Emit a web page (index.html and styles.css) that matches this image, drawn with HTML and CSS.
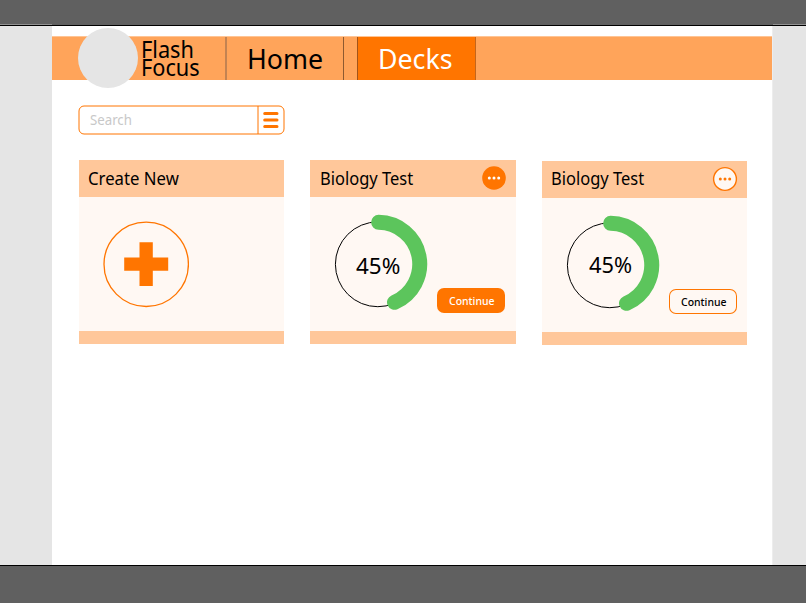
FILE: index.html
```html
<!DOCTYPE html>
<html lang="en">
<head>
<meta charset="utf-8">
<title>Flash Focus</title>
<link rel="stylesheet" href="styles.css">
</head>
<body>
<div class="band band-top"></div>
<div class="stage">
  <aside class="side side-left"></aside>
  <main class="page">
    <header class="topbar">
      <div class="avatar"></div>
      <div class="brand"><span class="t">Flash</span><span class="t">Focus</span></div>
      <nav class="tabs">
        <a class="tab home"><span class="t">Home</span></a>
        <a class="tab decks"><span class="t">Decks</span></a>
      </nav>
    </header>
    <div class="search">
      <span class="t placeholder">Search</span>
      <svg class="frame" width="208" height="30" viewBox="0 0 208 30">
        <rect x="1" y="1" width="205" height="28" rx="5"/>
        <path d="M180 1V29"/>
        <path class="bars" d="M186.700 8.500H199M186.700 14.900H199M186.700 21.400H199"/>
      </svg>
    </div>
    <section class="cards">
      <article class="card">
        <div class="card-head"><h2 class="t create">Create New</h2></div>
        <div class="card-body">
          <svg class="art" width="110" height="134" viewBox="0 0 110 134">
            <circle class="ring-orange" cx="67.200" cy="67.300" r="42.200"/>
            <path class="plus" d="M60.500 45.200h13.300v15.200h15.400v13.300H73.800v15.300H60.500V73.700H45.200V60.400h15.300z"/>
          </svg>
        </div>
        <div class="card-foot"></div>
      </article>
      <article class="card wide">
        <div class="card-head"><h2 class="t">Biology Test</h2>
          <svg class="more solid" width="26" height="26" viewBox="0 0 26 26"><circle class="disc" cx="13" cy="13" r="11.800"/><circle cx="8.300" cy="13" r="1.500"/><circle cx="13" cy="13" r="1.500"/><circle cx="17.700" cy="13" r="1.500"/></svg>
        </div>
        <div class="card-body">
          <svg class="art" width="125" height="134" viewBox="0 0 125 134">
            <circle class="track" cx="67.800" cy="67.300" r="42.400"/>
            <path class="value" d="M68.600 25.300A41.700 41.700 0 0 1 84.500 105.300"/>
          </svg>
          <span class="t percent">45%</span>
          <button class="btn filled"><span class="t">Continue</span></button>
        </div>
        <div class="card-foot"></div>
      </article>
      <article class="card lower">
        <div class="card-head"><h2 class="t">Biology Test</h2>
          <svg class="more outline" width="26" height="26" viewBox="0 0 26 26"><circle class="disc" cx="13" cy="13" r="11.400"/><circle cx="8.300" cy="13" r="1.500"/><circle cx="13" cy="13" r="1.500"/><circle cx="17.700" cy="13" r="1.500"/></svg>
        </div>
        <div class="card-body">
          <svg class="art" width="125" height="134" viewBox="0 0 125 134">
            <circle class="track" cx="67.800" cy="67.300" r="42.400"/>
            <path class="value" d="M68.600 25.300A41.700 41.700 0 0 1 84.500 105.300"/>
          </svg>
          <span class="t percent">45%</span>
          <button class="btn outlined"><span class="t">Continue</span></button>
        </div>
        <div class="card-foot"></div>
      </article>
    </section>
  </main>
  <aside class="side side-right"></aside>
</div>
<div class="band band-bottom"></div>
</body>
</html>
```
FILE: styles.css
```css
* { box-sizing: border-box; }
body {
  margin: 0;
  width: 806px;
  height: 603px;
  overflow: hidden;
  display: flex;
  flex-direction: column;
  background: #fff;
  color: #000;
  font-family: "Noto Sans", "Open Sans", sans-serif;
}
.t {
  display: inline-block;
  white-space: nowrap;
  transform-origin: 0 50%;
  transform: scaleX(.915);
}
.band { background: #606060; flex: none; }
.band-top { height: 26px; border-bottom: 1px solid #000; }
.band-bottom { height: 38px; border-top: 1px solid #000; }
.stage { display: flex; height: 539px; }
.side { background: #e5e5e5; position: relative; }
.side::before {
  content: "";
  position: absolute;
  left: 0;
  right: 0;
  top: -2px;
  height: 1px;
  background: #929292;
}
.side-left { width: 52px; }
.side-right { width: 34px; border-left: 1px solid #ededed; }
.page { width: 720px; padding-top: 10px; }

.topbar {
  height: 44px;
  display: flex;
  align-items: center;
  background: #ffa45a;
  border-top: 1px solid #ffc494;
}
.avatar {
  flex: none;
  width: 60px;
  height: 60px;
  margin: 0 0 2px 25.500px;
  border-radius: 50%;
  background: #e5e5e5;
}
.brand {
  width: 85px;
  padding: 0 0 2px 3px;
  display: flex;
  flex-direction: column;
  font-size: 23px;
  line-height: 18px;
}
.brand .t { transform: scaleX(.945); }
.tabs { display: flex; align-self: stretch; gap: 13px; margin-left: 2px; }
.tab {
  display: flex;
  align-items: center;
  padding-bottom: 2px;
  font-size: 28px;
  line-height: 40px;
}
.home {
  width: 119px;
  padding-left: 20.500px;
  border-left: 2px solid #c38352;
  border-right: 1px solid #8e5a30;
}
.home .t { transform: scaleX(.955); }
.decks {
  width: 119px;
  padding-left: 20.500px;
  color: #fff;
  background: #ff7500;
  border-left: 1px solid #a35419;
  border-right: 1px solid #c4661b;
}
.decks .t { transform: scaleX(.955); }

.search {
  position: relative;
  width: 208px;
  height: 30px;
  margin: 25px 0 0 26px;
  padding: 0 0 2px 11.500px;
  display: flex;
  align-items: center;
  font-size: 14px;
  color: #c8c8c8;
}
.placeholder { transform: scaleX(.945); }
.frame { position: absolute; left: 0; top: 0; fill: none; stroke: #ff7500; }
.bars { stroke-width: 3; stroke-linecap: round; }

.cards { display: flex; gap: 26px; margin: 25px 0 0 27px; }
.card { width: 205px; }
.wide { width: 206px; }
.lower { margin-top: 1px; }
.card-head {
  height: 37px;
  padding: 0 9px 0 9px;
  display: flex;
  align-items: center;
  justify-content: space-between;
  background: #ffc79a;
}
.wide .card-head { padding-left: 10px; }
h2 { margin: 0; padding-bottom: 2px; font-size: 18px; font-weight: 400; line-height: 34px; }
.lower h2 { padding-bottom: 4px; line-height: 32px; }
.create { transform: scaleX(.93); }
.more { margin-bottom: 1px; }
.more circle { fill: #fff; }
.solid .disc { fill: #ff7500; }
.outline circle { fill: #ff7500; }
.outline .disc { fill: #fff8f3; stroke: #ff7500; stroke-width: 1.400; }
.card-body {
  height: 134px;
  display: flex;
  background: #fff8f3;
}
.card-foot { height: 13px; background: #ffc79a; }
.art { flex: none; }
.ring-orange { fill: none; stroke: #ff7500; stroke-width: 1.300; }
.plus { fill: #ff7500; }
.track { fill: none; stroke: #000; }
.value { fill: none; stroke: #5cc55c; stroke-width: 15; stroke-linecap: round; }
.percent {
  align-self: center;
  width: 45px;
  margin: 1px 0 0 -79px;
  font-size: 22px;
  line-height: 30px;
  transform: scaleX(1.020);
}
.lower .percent { margin: 0 0 2px -78px; transform: scaleX(.990); }
.btn {
  flex: none;
  align-self: flex-start;
  width: 68px;
  height: 25px;
  margin: 91px 0 0 36px;
  padding: 0 0 0 12px;
  text-align: left;
  border: 0;
  border-radius: 7px;
  font: 500 11px/23px "Noto Sans", sans-serif;
}
.btn .t { transform: scaleX(.950); }
.lower .btn { margin-left: 35px; }
.filled { color: #fff; background: #ff7500; }
.outlined { color: #000; background: #fff8f3; box-shadow: inset 0 0 0 1px #ff7500; }
```
